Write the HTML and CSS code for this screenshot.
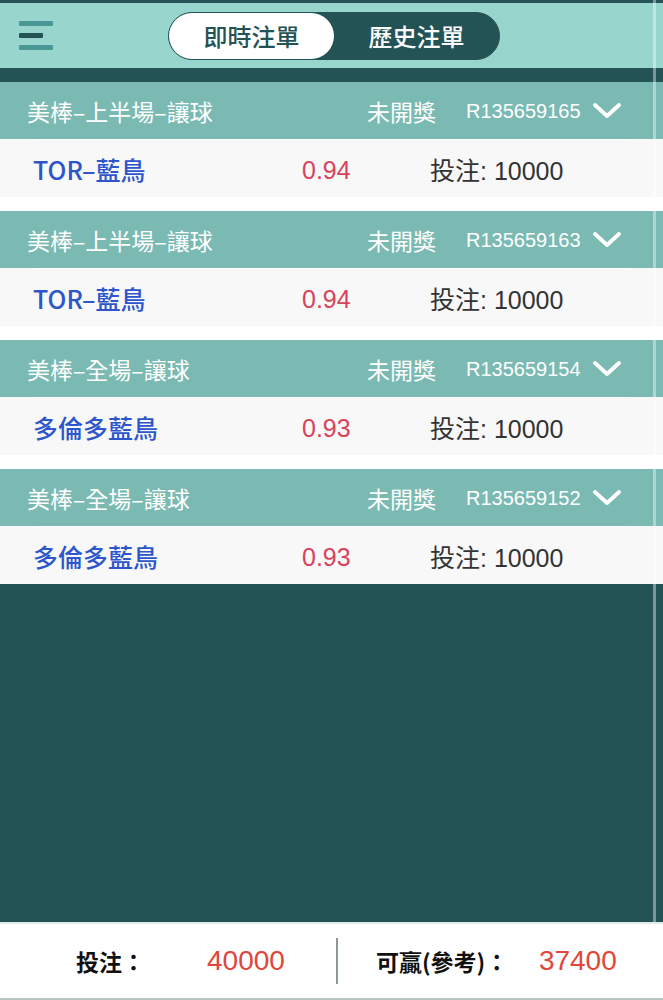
FILE: index.html
```html
<!doctype html>
<html>
  <head>
    <meta charset="utf-8">
    <meta name="viewport" content="width=device-width, initial-scale=1.0">
    <title>注單</title>
    <link rel="stylesheet" href="styles.css">
  </head>
  <body>
    <div class="page">

      <!-- top bar with menu and tab switch -->
      <header class="topbar">
        <div class="menu">
          <span class="bar"></span>
          <span class="bar short"></span>
          <span class="bar"></span>
        </div>
        <nav class="tabs">
          <div class="tab active">即時注單</div>
          <div class="tab">歷史注單</div>
        </nav>
      </header>

      <main class="content">
        <div class="orders">

          <section class="order">
            <div class="order-head">
              <span class="title">美棒–上半場–讓球</span>
              <span class="status">未開獎</span>
              <span class="code">R135659165</span>
              <svg class="chevron" viewBox="0 0 28 16"><path d="M2 2 L14 13 L26 2"/></svg>
            </div>
            <div class="order-body">
              <div class="bet">
                <span class="team">TOR–藍鳥</span>
                <span class="odds">0.94</span>
                <span class="stake">投注: 10000</span>
              </div>
            </div>
          </section>

          <section class="order">
            <div class="order-head">
              <span class="title">美棒–上半場–讓球</span>
              <span class="status">未開獎</span>
              <span class="code">R135659163</span>
              <svg class="chevron" viewBox="0 0 28 16"><path d="M2 2 L14 13 L26 2"/></svg>
            </div>
            <div class="order-body">
              <div class="bet">
                <span class="team">TOR–藍鳥</span>
                <span class="odds">0.94</span>
                <span class="stake">投注: 10000</span>
              </div>
            </div>
          </section>

          <section class="order">
            <div class="order-head">
              <span class="title">美棒–全場–讓球</span>
              <span class="status">未開獎</span>
              <span class="code">R135659154</span>
              <svg class="chevron" viewBox="0 0 28 16"><path d="M2 2 L14 13 L26 2"/></svg>
            </div>
            <div class="order-body">
              <div class="bet">
                <span class="team">多倫多藍鳥</span>
                <span class="odds">0.93</span>
                <span class="stake">投注: 10000</span>
              </div>
            </div>
          </section>

          <section class="order">
            <div class="order-head">
              <span class="title">美棒–全場–讓球</span>
              <span class="status">未開獎</span>
              <span class="code">R135659152</span>
              <svg class="chevron" viewBox="0 0 28 16"><path d="M2 2 L14 13 L26 2"/></svg>
            </div>
            <div class="order-body">
              <div class="bet">
                <span class="team">多倫多藍鳥</span>
                <span class="odds">0.93</span>
                <span class="stake">投注: 10000</span>
              </div>
            </div>
          </section>

        </div>
        <div class="edge"></div>
      </main>

      <!-- totals -->
      <footer class="totals">
        <span class="label">投注：</span>
        <span class="amount">40000</span>
        <span class="divider"></span>
        <span class="label wide">可贏(參考)：</span>
        <span class="amount">37400</span>
      </footer>

    </div>
  </body>
</html>
```

FILE: styles.css
```css
body {
  margin: 0;
  font-family: "Liberation Sans", "Noto Sans CJK TC", sans-serif;
  background-color: #245356;
}

.page {
  height: 1000px;
  display: flex;
  flex-direction: column;
}

.topbar {
  height: 65px;
  border-top: 3px solid #245356;
  border-bottom: 14px solid #245356;
  background-color: #97d5cd;
  display: flex;
  align-items: center;
}

.menu {
  width: 34px;
  margin-left: 19px;
  display: flex;
  flex-direction: column;
  gap: 7px;
}
.menu .bar {
  height: 5px;
  border-radius: 1px;
  background-color: #4a9896;
}
.menu .bar.short {
  width: 24px;
  background-color: #245356;
}

.tabs {
  margin-left: 115px;
  width: 330px;
  height: 46px;
  border: 1px solid #245356;
  border-radius: 24px;
  background-color: #245356;
  display: flex;
}
.tab {
  width: 165px;
  display: flex;
  align-items: center;
  justify-content: center;
  font-family: "Noto Sans CJK TC", sans-serif;
  font-size: 24px;
  font-weight: 500;
  color: #fff;
  border-radius: 24px;
}
.tab.active {
  background-color: #fff;
  color: #245356;
}

.content {
  flex: 1;
  position: relative;
}

.orders {
  background-color: #fff;
  display: flex;
  flex-direction: column;
  gap: 14px;
}

.order-head {
  height: 57px;
  background-color: #7bbab2;
  color: #fff;
  display: flex;
  align-items: center;
  padding-left: 27px;
}
.order-head .title {
  width: 340px;
  font-family: "Noto Sans CJK TC", sans-serif;
  font-size: 23px;
}
.order-head .status {
  width: 99px;
  font-family: "Noto Sans CJK TC", sans-serif;
  font-size: 23px;
}
.order-head .code {
  font-size: 20px;
  padding-top: 2px;
}
.chevron {
  width: 28px;
  height: 16px;
  margin-left: 12px;
  fill: none;
  stroke: #fff;
  stroke-width: 3.8;
  stroke-linecap: round;
  stroke-linejoin: round;
}

.order-body {
  height: 58px;
  background-color: #f8f8f8;
}
.bet {
  height: 57px;
  margin: 0 33px;
  border-top: 1px solid #fff;
  display: grid;
  grid-template-columns: 269px 128px 1fr;
  align-items: center;
  font-size: 25px;
}
.team {
  color: #2d55cc;
  font-weight: 500;
  font-family: "Noto Sans CJK TC", sans-serif;
  font-size: 25px;
}
.odds {
  color: #d6435a;
  padding-top: 3px;
}
.stake {
  color: #333;
}

.edge {
  position: absolute;
  top: -82px;
  bottom: 0;
  left: 653px;
  width: 3px;
  background-color: rgba(255, 255, 255, 0.4);
}

.totals {
  height: 74px;
  border-top: 2px solid #e3e9e8;
  border-bottom: 2px solid #b9c4c4;
  background-color: #fff;
  display: flex;
  align-items: center;
  padding-left: 76px;
}
.totals .label {
  width: 131px;
  font-family: "Noto Sans CJK TC", sans-serif;
  font-weight: 700;
  font-size: 23px;
  color: #111;
}
.totals .label.wide {
  width: 163px;
}
.totals .amount {
  font-size: 28px;
  color: #e0463a;
}
.divider {
  width: 2px;
  height: 46px;
  background-color: #8c9898;
  margin: 0 38px 0 51px;
}
```
